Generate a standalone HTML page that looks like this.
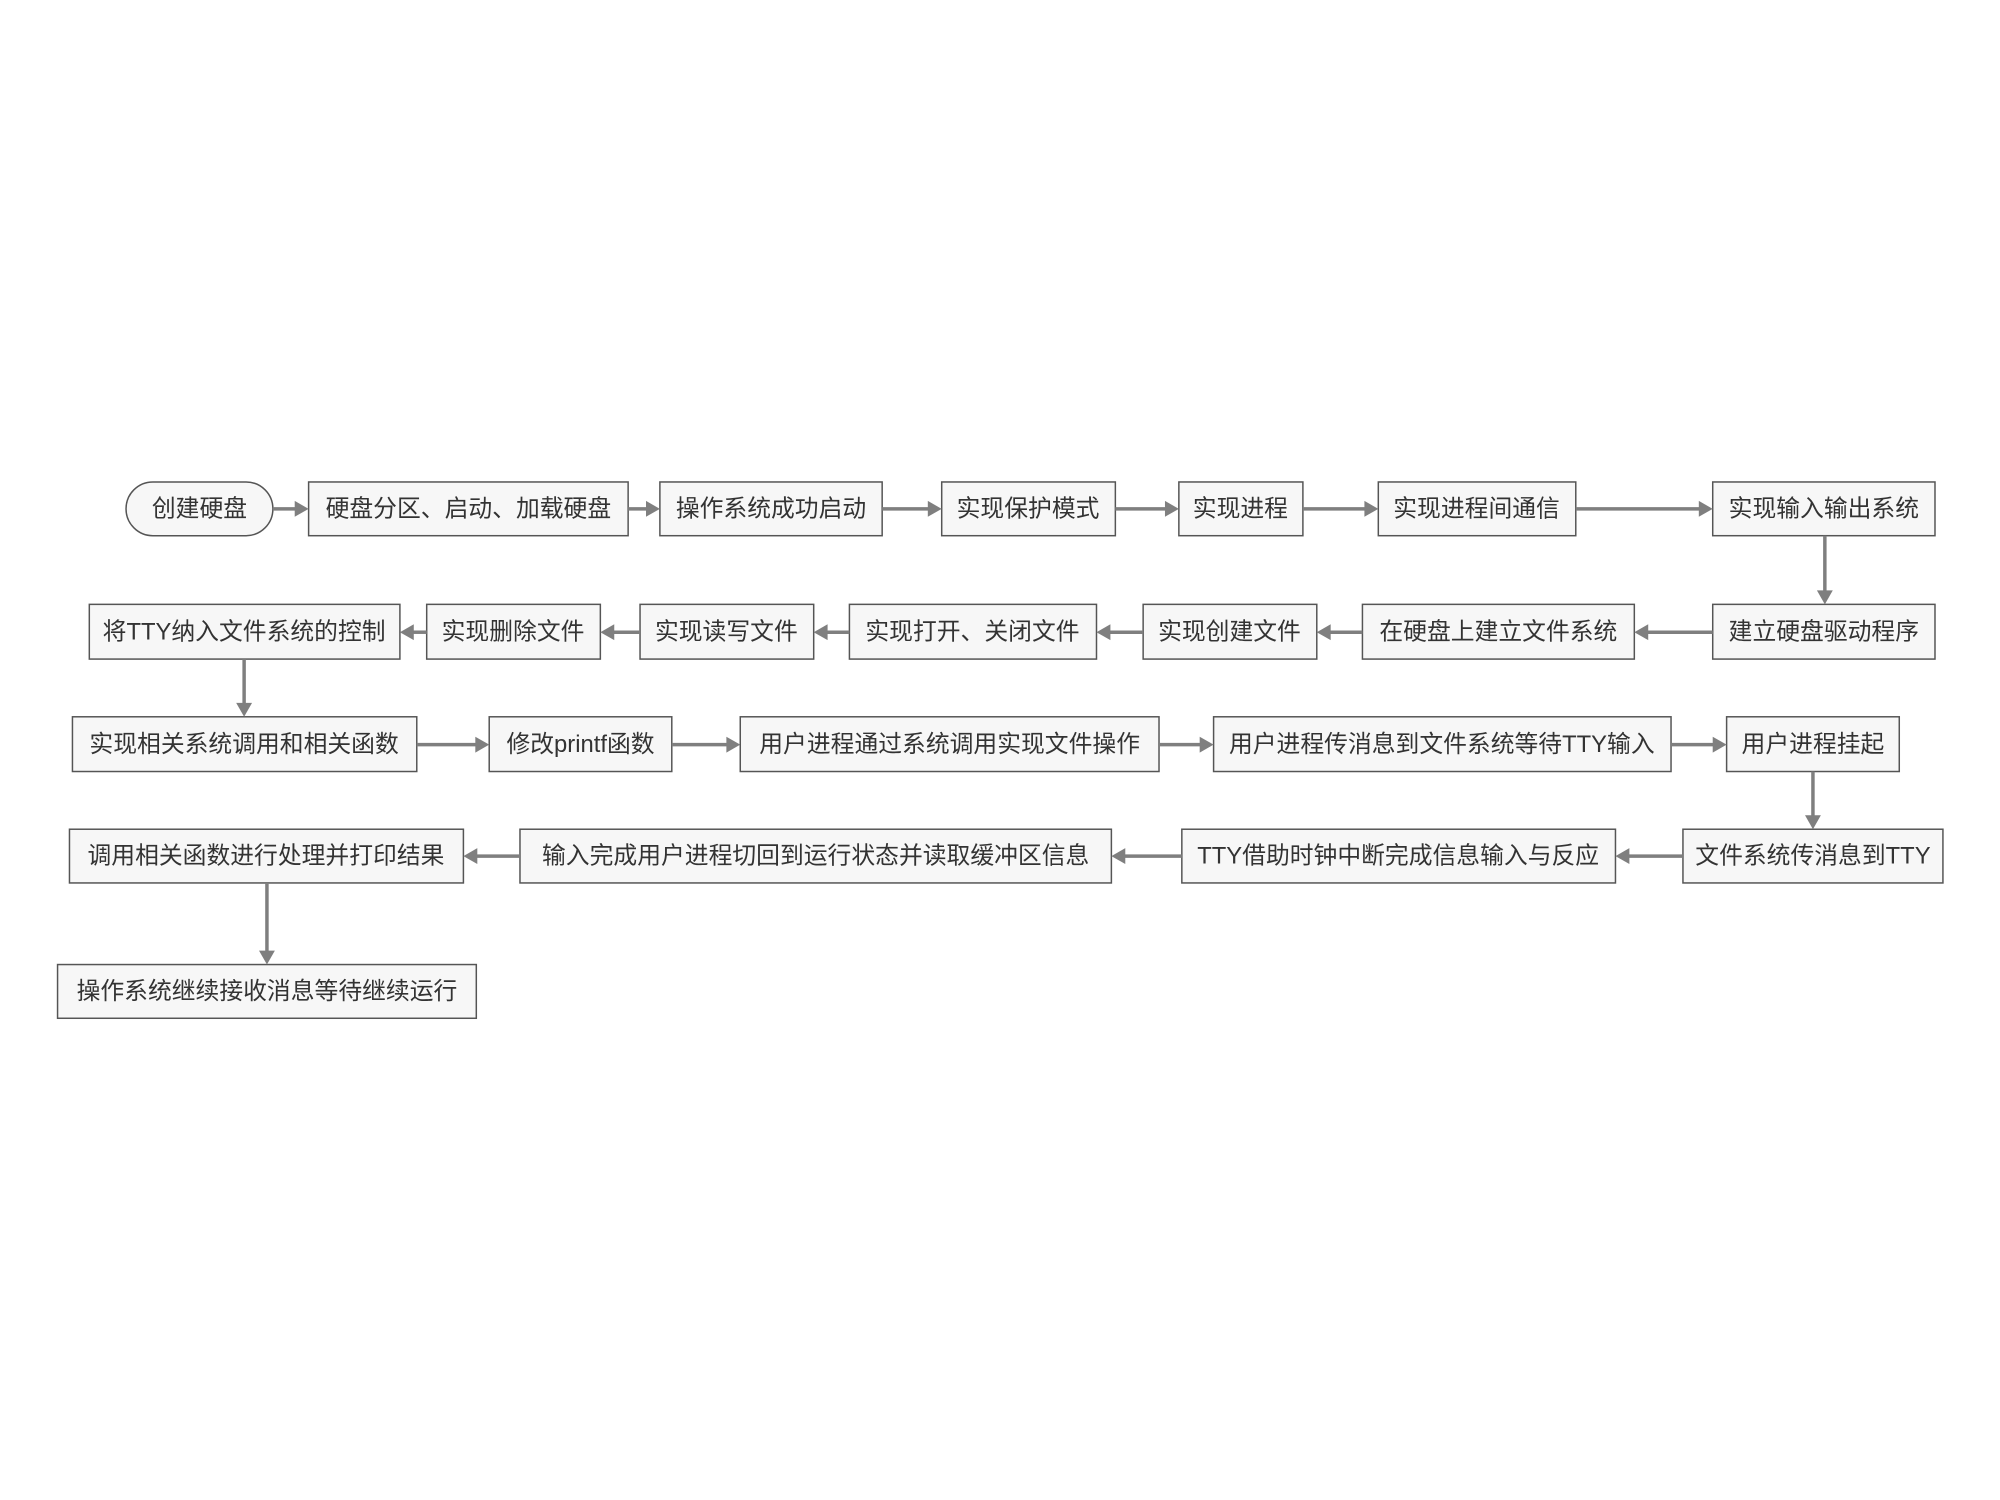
<!DOCTYPE html>
<html><head><meta charset="utf-8"><style>
html,body{margin:0;padding:0;background:#fff;}
svg{display:block}
text{font-family:"Liberation Sans","Noto Sans CJK SC",sans-serif;font-size:24px;fill:#333;text-anchor:middle;dominant-baseline:central}
.b{fill:#f7f7f7;stroke:#555;stroke-width:1.5}
.l{stroke:#7f7f7f;stroke-width:3.5;fill:none}
.a{fill:#7f7f7f}
</style></head><body>
<svg width="2000" height="1500" viewBox="0 0 2000 1500">
<g transform="translate(1,-1.6) scale(0.9923,0.995)">
<!-- Row 1 -->
<rect class="b" x="126" y="486" width="148" height="54" rx="27"/><text x="200" y="513">创建硬盘</text>
<rect class="b" x="310" y="486" width="322" height="54"/><text x="471" y="513">硬盘分区、启动、加载硬盘</text>
<rect class="b" x="664" y="486" width="224" height="54"/><text x="776" y="513">操作系统成功启动</text>
<rect class="b" x="948" y="486" width="175" height="54"/><text x="1035" y="513">实现保护模式</text>
<rect class="b" x="1187" y="486" width="125" height="54"/><text x="1249" y="513">实现进程</text>
<rect class="b" x="1388" y="486" width="199" height="54"/><text x="1487" y="513">实现进程间通信</text>
<rect class="b" x="1725" y="486" width="224" height="54"/><text x="1837" y="513">实现输入输出系统</text>
<!-- Row 2 -->
<rect class="b" x="89" y="609" width="313" height="55"/><text x="245" y="637">将TTY纳入文件系统的控制</text>
<rect class="b" x="429" y="609" width="175" height="55"/><text x="516" y="637">实现删除文件</text>
<rect class="b" x="644" y="609" width="175" height="55"/><text x="731" y="637">实现读写文件</text>
<rect class="b" x="855" y="609" width="249" height="55"/><text x="979" y="637">实现打开、关闭文件</text>
<rect class="b" x="1151" y="609" width="175" height="55"/><text x="1238" y="637">实现创建文件</text>
<rect class="b" x="1372" y="609" width="274" height="55"/><text x="1509" y="637">在硬盘上建立文件系统</text>
<rect class="b" x="1725" y="609" width="224" height="55"/><text x="1837" y="637">建立硬盘驱动程序</text>
<!-- Row 3 -->
<rect class="b" x="72" y="722" width="347" height="55"/><text x="245" y="750">实现相关系统调用和相关函数</text>
<rect class="b" x="492" y="722" width="184" height="55"/><text x="584" y="750">修改printf函数</text>
<rect class="b" x="745" y="722" width="422" height="55"/><text x="956" y="750">用户进程通过系统调用实现文件操作</text>
<rect class="b" x="1222" y="722" width="461" height="55"/><text x="1452" y="750">用户进程传消息到文件系统等待TTY输入</text>
<rect class="b" x="1739" y="722" width="174" height="55"/><text x="1826" y="750">用户进程挂起</text>
<!-- Row 4 -->
<rect class="b" x="69" y="835" width="397" height="54"/><text x="267" y="862">调用相关函数进行处理并打印结果</text>
<rect class="b" x="523" y="835" width="596" height="54"/><text x="821" y="862">输入完成用户进程切回到运行状态并读取缓冲区信息</text>
<rect class="b" x="1190" y="835" width="437" height="54"/><text x="1408" y="862">TTY借助时钟中断完成信息输入与反应</text>
<rect class="b" x="1695" y="835" width="262" height="54"/><text x="1826" y="862">文件系统传消息到TTY</text>
<!-- Row 5 -->
<rect class="b" x="57" y="971" width="422" height="54"/><text x="268" y="998">操作系统继续接收消息等待继续运行</text>

<line class="l" x1="274" y1="513" x2="298" y2="513"/><polygon class="a" points="310,513 296,505 296,521"/>
<line class="l" x1="632" y1="513" x2="652" y2="513"/><polygon class="a" points="664,513 650,505 650,521"/>
<line class="l" x1="888" y1="513" x2="936" y2="513"/><polygon class="a" points="948,513 934,505 934,521"/>
<line class="l" x1="1123" y1="513" x2="1175" y2="513"/><polygon class="a" points="1187,513 1173,505 1173,521"/>
<line class="l" x1="1312" y1="513" x2="1376" y2="513"/><polygon class="a" points="1388,513 1374,505 1374,521"/>
<line class="l" x1="1587" y1="513" x2="1713" y2="513"/><polygon class="a" points="1725,513 1711,505 1711,521"/>
<line class="l" x1="1838" y1="540" x2="1838" y2="597"/><polygon class="a" points="1838,609 1830,595 1846,595"/>
<line class="l" x1="1725" y1="637" x2="1658" y2="637"/><polygon class="a" points="1646,637 1660,629 1660,645"/>
<line class="l" x1="1372" y1="637" x2="1338" y2="637"/><polygon class="a" points="1326,637 1340,629 1340,645"/>
<line class="l" x1="1151" y1="637" x2="1116" y2="637"/><polygon class="a" points="1104,637 1118,629 1118,645"/>
<line class="l" x1="855" y1="637" x2="831" y2="637"/><polygon class="a" points="819,637 833,629 833,645"/>
<line class="l" x1="644" y1="637" x2="616" y2="637"/><polygon class="a" points="604,637 618,629 618,645"/>
<line class="l" x1="429" y1="637" x2="414" y2="637"/><polygon class="a" points="402,637 416,629 416,645"/>
<line class="l" x1="245" y1="664" x2="245" y2="710"/><polygon class="a" points="245,722 237,708 253,708"/>
<line class="l" x1="419" y1="750" x2="480" y2="750"/><polygon class="a" points="492,750 478,742 478,758"/>
<line class="l" x1="676" y1="750" x2="733" y2="750"/><polygon class="a" points="745,750 731,742 731,758"/>
<line class="l" x1="1167" y1="750" x2="1210" y2="750"/><polygon class="a" points="1222,750 1208,742 1208,758"/>
<line class="l" x1="1683" y1="750" x2="1727" y2="750"/><polygon class="a" points="1739,750 1725,742 1725,758"/>
<line class="l" x1="1826" y1="777" x2="1826" y2="823"/><polygon class="a" points="1826,835 1818,821 1834,821"/>
<line class="l" x1="1695" y1="862" x2="1639" y2="862"/><polygon class="a" points="1627,862 1641,854 1641,870"/>
<line class="l" x1="1190" y1="862" x2="1131" y2="862"/><polygon class="a" points="1119,862 1133,854 1133,870"/>
<line class="l" x1="523" y1="862" x2="478" y2="862"/><polygon class="a" points="466,862 480,854 480,870"/>
<line class="l" x1="268" y1="889" x2="268" y2="959"/><polygon class="a" points="268,971 260,957 276,957"/>
</g>
</svg>
</body></html>
